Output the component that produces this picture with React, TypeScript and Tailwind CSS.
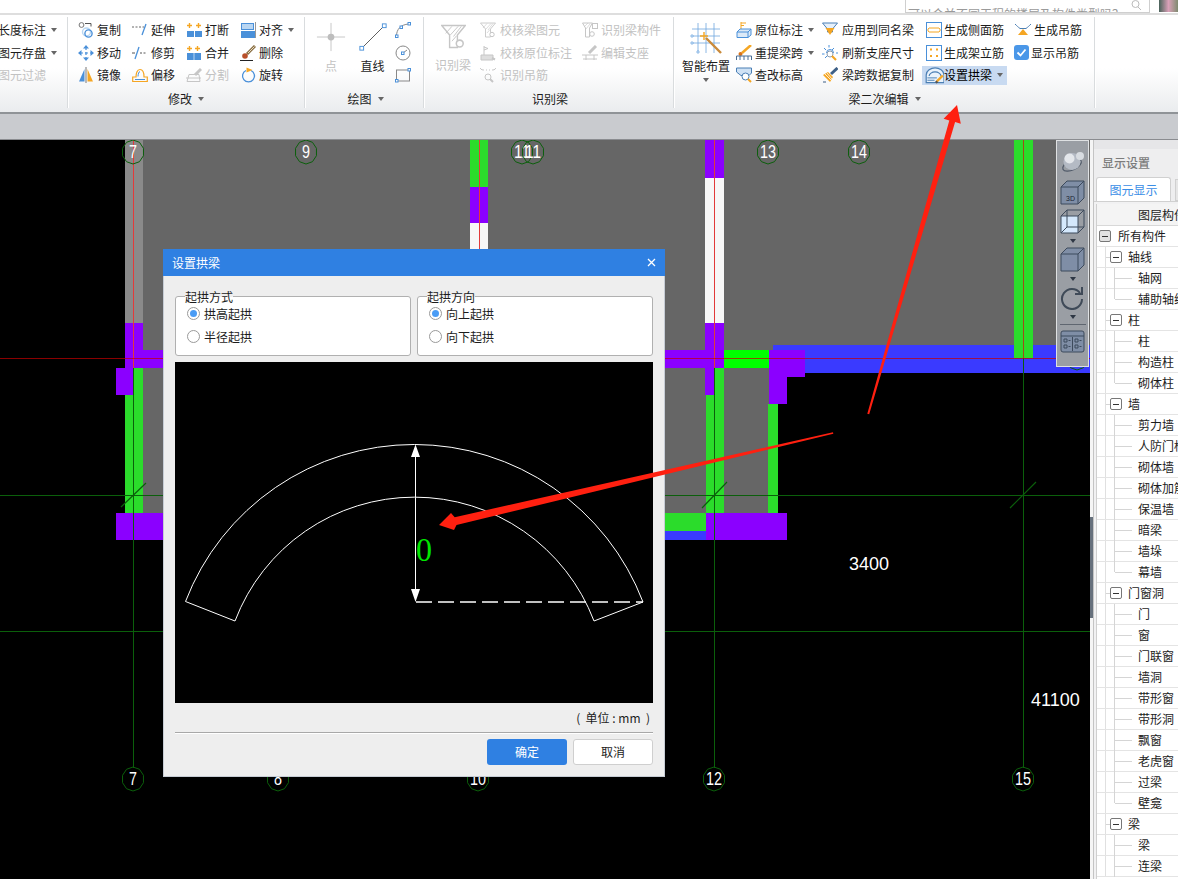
import type { ReactNode } from "react";

const BLUE = "#4a90d9";
const LIGHT = "#b9d6f2";
const ORANGE = "#f5a623";
const OFF = "#c6c6c6";
const DARKGREEN = "#0b5f0b";

function Ic({ children, size = 16 }: { children: ReactNode; size?: number }) {
  return (
    <svg width={size} height={size} viewBox="0 0 16 16" fill="none" className="shrink-0">
      {children}
    </svg>
  );
}

function Caret({ className = "" }: { className?: string }) {
  return <span className={`inline-block w-0 h-0 border-x-[3.5px] border-t-[4px] border-x-transparent border-t-[#666] ${className}`} />;
}

function Item({ icon, label, w, off, caret }: { icon?: ReactNode; label: string; w: number; off?: boolean; caret?: boolean }) {
  return (
    <div className={`flex items-center h-[22.5px] whitespace-nowrap ${off ? "text-[#c2c2c2]" : "text-[#1c1c1c]"}`}>
      <div style={{ width: w }} className="shrink-0 flex items-center">
        {icon}
      </div>
      <span>{label}</span>
      {caret && <Caret className="ml-[5px]" />}
    </div>
  );
}

function Group({ width, label, children, caret, labelPad = 0 }: { width: number; label?: string; children: ReactNode; caret?: boolean; labelPad?: number }) {
  return (
    <div style={{ width }} className="shrink-0 h-full flex flex-col relative">
      <div className="flex h-[72px] pt-[4px]">{children}</div>
      <div style={{ paddingRight: labelPad }} className="flex-1 flex items-center justify-center gap-[6px] pb-[2px] text-[#1c1c1c]">
        {label && <span>{label}</span>}
        {caret && <Caret />}
      </div>
      <div className="absolute right-0 top-[2px] bottom-[4px] w-[2px] bg-[#d9dcde] border-r border-white" />
    </div>
  );
}

/* ---------- small ribbon icons ---------- */
const CopyIc = (
  <Ic>
    <circle cx="3.5" cy="3" r="2.4" stroke="#777" />
    <path d="M7 1.5h6v3" stroke="#555" />
    <circle cx="8.5" cy="10" r="4" stroke={LIGHT} strokeWidth="1.4" />
    <circle cx="10.5" cy="11.5" r="3.6" stroke={BLUE} strokeWidth="1.4" />
  </Ic>
);
const ExtendIc = (
  <Ic>
    <path d="M0 5h2M3.5 5h2M7 5h2" stroke="#666" />
    <path d="M10 13l4-11" stroke={BLUE} strokeWidth="1.3" />
    <path d="M10.5 5h1.5" stroke="#666" />
  </Ic>
);
const BreakIc = (
  <Ic>
    <path d="M1 3.5h5M3.5 1v5M10 3.5h5M12.5 1v5" stroke={ORANGE} strokeWidth="1.4" />
    <rect x="1" y="9" width="7" height="6" fill={BLUE} />
    <rect x="9" y="9" width="7" height="6" fill={BLUE} />
  </Ic>
);
const AlignIc = (
  <Ic>
    <rect x="1.5" y="1.5" width="12" height="6" fill={LIGHT} stroke={BLUE} />
    <rect x="1" y="9" width="14" height="7" fill={BLUE} />
    <path d="M15.5 0v16" stroke="#999" />
  </Ic>
);
const MoveIc = (
  <Ic>
    <path d="M8 2v12M2 8h12" stroke={BLUE} strokeWidth="1.2" strokeDasharray="3 2" />
    <path d="M8 0l3 3.5H5zM8 16l3-3.5H5zM0 8l3.5-3v6zM16 8l-3.5-3v6z" fill={BLUE} />
  </Ic>
);
const TrimIc = (
  <Ic>
    <path d="M0 8h3M8 8h2M11.5 8h2" stroke="#555" />
    <path d="M3 14l4-12" stroke={BLUE} strokeWidth="1.3" />
  </Ic>
);
const MergeIc = (
  <Ic>
    <path d="M1 3.5h5M3.5 1v5M9 3.5h5M11.5 1v5" stroke={ORANGE} strokeWidth="1.4" />
    <rect x="1" y="8" width="14" height="7" fill={BLUE} />
    <path d="M8 8v7" stroke={LIGHT} />
  </Ic>
);
const DeleteIc = (
  <Ic>
    <path d="M15 1L7 9" stroke="#8a6f45" strokeWidth="3" />
    <path d="M14.5 1.5L8 8" stroke="#e8dcc0" />
    <circle cx="5" cy="11" r="2.8" fill="#b9502a" />
    <path d="M0 15.5h13" stroke="#222" />
  </Ic>
);
const MirrorIc = (
  <Ic>
    <path d="M1 14.5L6.5 2v12.5z" fill={BLUE} />
    <path d="M8 0v16" stroke="#777" />
    <path d="M9.5 2L15 14.5H9.5z" fill={ORANGE} />
  </Ic>
);
const OffsetIc = (
  <Ic>
    <path d="M0.7 14.5V10H4c0-3.5 1-7.5 4-7.5s4 4 4 7.5h3.3v4.5z" stroke={ORANGE} strokeWidth="1.2" />
    <path d="M3 12.5h10M6 9.5c0-2.5 1-5 2-5" stroke={BLUE} />
  </Ic>
);
const SplitIc = (
  <Ic>
    <path d="M1 14.5h13l-1-7H3zM0 11h15" stroke={OFF} />
    <path d="M15 2l-6 6" stroke={OFF} strokeWidth="3" />
  </Ic>
);
const RotateIc = (
  <Ic>
    <path d="M6 3.5A6 6 0 1 0 11 3.5" stroke={BLUE} strokeWidth="1.3" />
    <path d="M6.5 0.5l6 2.5-6 2.5z" fill={ORANGE} />
  </Ic>
);

/* hatched funnel used by the greyed beam tools */
function Funnel({ size = 16 }: { size?: number }) {
  return (
    <Ic size={size}>
      <path d="M0.5 1h15l-5 6v8h-5V7z" stroke={OFF} strokeWidth="0.9" />
      <path d="M3 6l4-4.500M6 7l5-5.500M8 8l5-6.500M7 11l3-3.500" stroke={OFF} strokeWidth="0.6" />
      <circle cx="12" cy="12.5" r="2.2" fill="#fff" stroke={OFF} />
    </Ic>
  );
}
const CheckOriginIc = (
  <Ic>
    <path d="M4 1v9M4 2l4 1.5L4 5" stroke={OFF} />
    <path d="M1 10h12v5H1z" fill="#dedede" stroke={OFF} />
    <path d="M12 13l3 1.5" stroke={OFF} strokeWidth="2" />
  </Ic>
);
const RecogHangIc = (
  <Ic>
    <path d="M0 1c1 2 3 2 4 2M16 1c-1 2-3 2-4 2M6 3h1M9 3h1" stroke={OFF} />
    <circle cx="8" cy="10" r="3" stroke={OFF} />
    <path d="M10 12l3 3" stroke={OFF} strokeWidth="2" />
  </Ic>
);
const RecogPartIc = (
  <Ic>
    <path d="M0.5 1h10l-3 5v9h-4V6z" stroke={OFF} />
    <path d="M2 5l4-4M4 7l4-5" stroke={OFF} strokeWidth="0.6" />
    <rect x="10.5" y="1.5" width="5" height="5" stroke={OFF} />
    <circle cx="10" cy="12" r="2.3" stroke={OFF} />
  </Ic>
);
const EditSeatIc = (
  <Ic>
    <path d="M0 10h16M1 14h14M4 10v5M12 10v5" stroke={OFF} />
    <path d="M14 1L7 8" stroke={OFF} strokeWidth="3" />
  </Ic>
);

const OriginIc = (
  <Ic>
    <path d="M5 0v8M5 1h5M5 3.5h3" stroke={ORANGE} />
    <path d="M1 10l3-3h11v6l-3 2.5H1z" fill="#dbe9f7" stroke={BLUE} />
    <path d="M1 10h11v5.5M12 10l3-3" stroke={BLUE} />
  </Ic>
);
const ReSpanIc = (
  <Ic>
    <path d="M15 0L6 8" stroke={ORANGE} strokeWidth="2.5" />
    <circle cx="4.5" cy="9" r="2" fill="#d9731a" />
    <path d="M0.5 15v-4h15v4M4 11v4M8 11v4M12 11v4" stroke="#4b6f96" />
  </Ic>
);
const ElevIc = (
  <Ic>
    <path d="M0.5 1h15v5l-2.5 2.5H5L0.5 5z" fill="#cfe2f5" stroke="#4b7fb4" />
    <circle cx="9.5" cy="9.5" r="3.5" fill="#fff" stroke="#4b7fb4" />
    <path d="M12 12l3 3" stroke={ORANGE} strokeWidth="2" />
  </Ic>
);
const ApplyIc = (
  <Ic>
    <path d="M0.5 1h15l-5 6v3h-5V7z" fill="#e6f0fa" stroke="#4b7fb4" />
    <path d="M3.5 6h9L8 13z" fill={ORANGE} />
  </Ic>
);
const RefreshIc = (
  <Ic>
    <path d="M7 0v2.5M2 3l2 2M12 3l-2 2M0 9h2.5M14 8h2M3 13l2-2" stroke={BLUE} />
    <path d="M4.5 8a3.5 3.5 0 0 1 7 0" stroke={BLUE} />
    <circle cx="8" cy="9" r="3" stroke="#8a9cb0" />
    <path d="M10 11l4 4" stroke={ORANGE} strokeWidth="2.2" />
  </Ic>
);
const CopyDataIc = (
  <Ic>
    <path d="M15.5 1L9 7" stroke="#3d5f86" strokeWidth="3" />
    <path d="M1 8l5-3 5 5-3 5z" fill={ORANGE} />
    <path d="M3 7l6 6M5 6l5 6" stroke="#fff" strokeWidth="0.8" />
    <path d="M1 15h3" stroke="#3d5f86" />
  </Ic>
);
const SideIc = (
  <Ic>
    <rect x="0.5" y="0.5" width="15" height="15" stroke={BLUE} />
    <path d="M3 6h10M3 10h10M3 6c-1.5 1-1.5 3 0 4M13 6c1.5 1 1.5 3 0 4" stroke={ORANGE} />
  </Ic>
);
const FrameIc = (
  <Ic>
    <rect x="0.5" y="0.5" width="15" height="15" stroke={BLUE} />
    <path d="M4 4.5h2M10 4.5h2M4 11h2M10 11h2" stroke={ORANGE} strokeWidth="2" />
  </Ic>
);
const ArchIc = (
  <Ic size={19}>
    <path d="M1 14V7.5C1 4 5 1.5 8.5 1.5S16 4 16 7.5V14z" fill="#e9f2fb" stroke="#4b7fb4" />
    <path d="M3.5 8.5c0-2 2.5-3.5 5-3.5s5 1.5 5 3.5" stroke="#4b7fb4" />
    <path d="M2 10h8M2 12h6" stroke="#4b7fb4" strokeWidth="0.8" />
    <path d="M15 8l-5 5" stroke={ORANGE} strokeWidth="2" />
    <path d="M9 14l1.5-1" stroke="#555" strokeWidth="2" />
  </Ic>
);
const HangIc = (
  <Ic>
    <path d="M0 2c2 2 3 3 5 4.5h6C13 5 14 4 16 2" stroke="#4b7fb4" />
    <path d="M8 7l5 6H3z" fill={ORANGE} />
  </Ic>
);
const ShowIc = (
  <span className="w-[15px] h-[15px] rounded-[3px] bg-[#4a97e8] flex items-center justify-center">
    <svg width="11" height="11" viewBox="0 0 11 11" fill="none">
      <path d="M1.5 5.5l3 3 5-6" stroke="#fff" strokeWidth="1.8" />
    </svg>
  </span>
);

function Ribbon() {
  return (
    <div className="flex h-[97px] bg-linear-to-b from-white via-white via-55% to-[#eaecee] text-[12px] leading-none">
      <Group width={69}>
        <div className="flex flex-col w-[69px] overflow-hidden">
          <div className="-ml-[2px]">
            <Item w={0} label="长度标注" caret />
            <Item w={0} label="图元存盘" caret />
            <Item w={0} label="图元过滤" off />
          </div>
        </div>
      </Group>

      <Group width={237} label="修改" caret labelPad={3}>
        <div className="flex pl-[9px]">
          <div className="w-[54px]">
            <Item w={19} icon={CopyIc} label="复制" />
            <Item w={19} icon={MoveIc} label="移动" />
            <Item w={19} icon={MirrorIc} label="镜像" />
          </div>
          <div className="w-[54px]">
            <Item w={19} icon={ExtendIc} label="延伸" />
            <Item w={19} icon={TrimIc} label="修剪" />
            <Item w={19} icon={OffsetIc} label="偏移" />
          </div>
          <div className="w-[54px]">
            <Item w={19} icon={BreakIc} label="打断" />
            <Item w={19} icon={MergeIc} label="合并" />
            <Item w={19} icon={SplitIc} label="分割" off />
          </div>
          <div>
            <Item w={19} icon={AlignIc} label="对齐" caret />
            <Item w={19} icon={DeleteIc} label="删除" />
            <Item w={19} icon={RotateIc} label="旋转" />
          </div>
        </div>
      </Group>

      <Group width={119} label="绘图" caret>
        <div className="flex pl-[5px]">
          <div className="w-[40px] flex flex-col items-center pt-[3px] gap-[8px] text-[#c2c2c2]">
            <Ic size={30}>
              <path d="M8 0.5v15M0.5 8h15" stroke="#c4c4c4" strokeWidth="0.5" />
              <circle cx="8" cy="8" r="1.8" fill="#bdbdbd" />
            </Ic>
            <span>点</span>
          </div>
          <div className="w-[43px] flex flex-col items-center pt-[3px] gap-[8px] text-[#1c1c1c]">
            <Ic size={30}>
              <path d="M2 14L14 2" stroke="#555" strokeWidth="0.5" />
              <rect x="1" y="13" width="2" height="2" fill="#fff" stroke={BLUE} strokeWidth="0.5" />
              <rect x="13" y="1" width="2" height="2" fill="#fff" stroke={BLUE} strokeWidth="0.5" />
            </Ic>
            <span>直线</span>
          </div>
          <div className="flex flex-col ml-[1px]">
            <div className="h-[22.5px] flex items-center">
              <Ic>
                <path d="M1.5 14C1.5 8 5 2.5 14 2" stroke="#888" />
                <rect x="0.5" y="13" width="2.5" height="2.5" fill="#fff" stroke={BLUE} />
                <rect x="13" y="0.5" width="2.5" height="2.5" fill="#fff" stroke={BLUE} />
                <rect x="5" y="4" width="2.5" height="2.5" fill="#fff" stroke={BLUE} />
              </Ic>
            </div>
            <div className="h-[22.5px] flex items-center">
              <Ic>
                <circle cx="8" cy="8" r="7" stroke="#888" />
                <path d="M8 8l4-3" stroke="#888" />
                <rect x="6.5" y="7" width="2.5" height="2.5" fill="#fff" stroke={BLUE} />
              </Ic>
            </div>
            <div className="h-[22.5px] flex items-center">
              <Ic>
                <rect x="1.5" y="3" width="13" height="11" stroke="#888" />
                <rect x="0.5" y="12.5" width="2.5" height="2.5" fill="#fff" stroke={BLUE} />
                <rect x="13" y="1.5" width="2.5" height="2.5" fill="#fff" stroke={BLUE} />
              </Ic>
            </div>
          </div>
        </div>
      </Group>

      <Group width={250} label="识别梁">
        <div className="flex pl-[10px]">
          <div className="w-[45px] flex flex-col items-start pt-[5px] gap-[10px] text-[#c2c2c2]">
            <span className="pl-[6px]">
              <Funnel size={25} />
            </span>
            <span>识别梁</span>
          </div>
          <div className="w-[102px]">
            <Item w={20} icon={<Funnel />} label="校核梁图元" off />
            <Item w={20} icon={CheckOriginIc} label="校核原位标注" off />
            <Item w={20} icon={RecogHangIc} label="识别吊筋" off />
          </div>
          <div>
            <Item w={19} icon={RecogPartIc} label="识别梁构件" off />
            <Item w={19} icon={EditSeatIc} label="编辑支座" off />
          </div>
        </div>
      </Group>

      <Group width={421} label="梁二次编辑" caret labelPad={2}>
        <div className="flex pl-[4px]">
          <div className="w-[54px] mr-[3px] flex flex-col items-center pt-[3px] text-[#1c1c1c]">
            <Ic size={32}>
              <path d="M1 3.5h14M1 7h14M1 10.5h14M4 0.5v15M8 0.5v15M12 0.5v15" stroke="#6ea6de" strokeWidth="0.4" />
              <path d="M0.5 6.5h1v1h-1zM0.5 10h1v1h-1zM3.5 14.5h1v1h-1z" fill="#fff" stroke="#4a90d9" strokeWidth="0.3" />
              <path d="M15.5 15.5L8 8" stroke="#c98a3a" strokeWidth="1.2" />
              <path d="M7 5v4M5 7h4" stroke={ORANGE} strokeWidth="0.7" />
            </Ic>
            <span className="mt-[6px]">智能布置</span>
            <Caret className="mt-[6px]" />
          </div>
          <div className="w-[86px]">
            <Item w={19} icon={OriginIc} label="原位标注" caret />
            <Item w={19} icon={ReSpanIc} label="重提梁跨" caret />
            <Item w={19} icon={ElevIc} label="查改标高" />
          </div>
          <div className="w-[104px]">
            <Item w={20} icon={ApplyIc} label="应用到同名梁" />
            <Item w={20} icon={RefreshIc} label="刷新支座尺寸" />
            <Item w={20} icon={CopyDataIc} label="梁跨数据复制" />
          </div>
          <div className="w-[89px]">
            <Item w={18} icon={SideIc} label="生成侧面筋" />
            <Item w={18} icon={FrameIc} label="生成架立筋" />
            <div className="h-[22.5px] flex items-center -ml-[4px]">
              <div className="w-[85px] h-[19px] bg-[#c8daf1] flex items-center pl-[3px] whitespace-nowrap">
                <span className="w-[19px] shrink-0">{ArchIc}</span>
                <span>设置拱梁</span>
                <Caret className="ml-[5px]" />
              </div>
            </div>
          </div>
          <div>
            <Item w={19} icon={HangIc} label="生成吊筋" />
            <Item w={16} icon={<span className="-ml-[1px]">{ShowIc}</span>} label="显示吊筋" />
          </div>
        </div>
      </Group>
    </div>
  );
}

/* ---------- CAD drawing ---------- */
function Axis({ x, y, t }: { x: number; y: number; t: string }) {
  const pts = Array.from({ length: 10 }, (_, i) => {
    const a = (i * Math.PI) / 5 + Math.PI / 10;
    return `${x + 11 * Math.cos(a)},${y + 12 * Math.sin(a)}`;
  }).join(" ");
  return (
    <g>
      <polygon points={pts} fill="none" stroke={DARKGREEN} />
      {t && (
        <text x={x} y={y + 6} textAnchor="middle" fontSize="19" fill="#fff" fontFamily="Liberation Sans" textLength={t.length * 8} lengthAdjust="spacingAndGlyphs">
          {t}
        </text>
      )}
    </g>
  );
}

const rects: [number, number, number, number, string][] = [
  // concrete slab
  [125, 140, 965, 205, "#666666"],
  [143, 345, 630, 5, "#666666"],
  [143, 350, 563, 163, "#666666"],
  // left wall
  [125, 140, 18, 183, "#8a8a8a"],
  [125, 323, 18, 45, "#8b00ff"],
  [143, 350, 20, 18, "#8b00ff"],
  [116, 368, 18, 27, "#8b00ff"],
  [134, 368, 9, 27, "#2bdc2b"],
  [125, 395, 18, 118, "#2bdc2b"],
  [116, 513, 60, 27, "#8b00ff"],
  // middle columns
  [470, 140, 18, 47, "#2bdc2b"],
  [470, 187, 18, 36, "#8b00ff"],
  [470, 223, 18, 40, "#f7f7f7"],
  [705, 140, 19, 38, "#8b00ff"],
  [705, 178, 19, 145, "#f7f7f7"],
  [705, 323, 19, 72, "#8b00ff"],
  [650, 350, 74, 18, "#8b00ff"],
  [715, 368, 9, 27, "#2bdc2b"],
  [706, 395, 18, 118, "#2bdc2b"],
  [650, 513, 56, 18, "#2bdc2b"],
  [650, 531, 56, 9, "#3a3aff"],
  [706, 513, 81, 27, "#8b00ff"],
  [724, 350, 45, 18, "#00ff00"],
  [724, 368, 45, 145, "#666666"],
  [768, 404, 10, 109, "#2bdc2b"],
  // right blue beam
  [773, 345, 317, 28, "#3a3aff"],
  [769, 350, 36, 27, "#8b00ff"],
  [769, 377, 18, 27, "#8b00ff"],
  [1014, 140, 19, 218, "#2bdc2b"],
];

function Drawing() {
  return (
    <svg viewBox="0 140 1090 739" width="1090" height="739" className="block" shapeRendering="crispEdges">
      {rects.map(([x, y, w, h, c], i) => (
        <rect key={i} x={x} y={y} width={w} height={h} fill={c} />
      ))}
      <g shapeRendering="auto">
        {/* axis lines */}
        <g stroke={DARKGREEN} strokeWidth="1" shapeRendering="crispEdges">
          <path d="M0 495.5H1090M0 631.5H1090" />
          <path d="M133.5 368V768M278.5 700V768M478.5 700V768M714.5 368V768M1023.5 358V768" />
        </g>
        <path d="M121 507L146 483M702 508L727 482M1010 508L1036 482" stroke={DARKGREEN} strokeWidth="1.2" />
        <g stroke="#e23a3a" strokeWidth="1" shapeRendering="crispEdges">
          <path d="M133.5 140V368M479.5 140V260M714.5 140V368" />
        </g>
        <path d="M1023.5 140V358" stroke="#a34a1a" shapeRendering="crispEdges" />
        <path d="M0 358.5H1090" stroke="#c40000" strokeOpacity="0.7" shapeRendering="crispEdges" />

        <Axis x={133} y={152} t="7" />
        <Axis x={306} y={152} t="9" />
        <Axis x={522} y={152} t="11" />
        <Axis x={533} y={152} t="11" />
        <Axis x={768} y={152} t="13" />
        <Axis x={859} y={152} t="14" />
        <Axis x={1077} y={358} t="" />
        <Axis x={133} y={779} t="7" />
        <Axis x={278} y={779} t="8" />
        <Axis x={478} y={779} t="10" />
        <Axis x={714} y={779} t="12" />
        <Axis x={1023} y={779} t="15" />

        <text x="849" y="570" fontSize="18" fill="#fff" fontFamily="Liberation Sans">3400</text>
        <text x="1031" y="706" fontSize="18" fill="#fff" fontFamily="Liberation Sans">41100</text>
      </g>
    </svg>
  );
}

/* ---------- dialog ---------- */
function Radio({ label, on }: { label: string; on?: boolean }) {
  return (
    <div className="flex items-center gap-[4px] h-[23px]">
      <span className="w-[13px] h-[13px] rounded-full border border-[#9a9a9a] bg-white flex items-center justify-center">
        {on && <span className="w-[7px] h-[7px] rounded-full bg-[#4a9cf5]" />}
      </span>
      <span>{label}</span>
    </div>
  );
}

function Box({ title, a, b }: { title: string; a: string; b: string }) {
  return (
    <div className="relative h-[60px] bg-white border border-[#b0b0b0] rounded-[3px] pl-[11px] pt-[5px]">
      <span className="absolute left-[9px] -top-[7px] leading-[14px] bg-linear-to-b from-[#eeeeee] from-50% to-white to-50%">{title}</span>
      <Radio label={a} on />
      <Radio label={b} />
    </div>
  );
}

function ArchPreview() {
  return (
    <svg viewBox="175 362 478 341" width="478" height="341" className="block bg-black">
      <g stroke="#fff" fill="none" strokeWidth="1">
        <path d="M185.5 601.5A245 245 0 0 1 643 602" />
        <path d="M235 621A192 192 0 0 1 594 621" />
        <path d="M185.5 601.5L235 621M643 602L594 621" />
        <path d="M415.5 446V600" />
        <path d="M416 602H643" strokeDasharray="16 6" strokeWidth="1.3" />
      </g>
      <path d="M415.5 444.5L411 457H420zM415.5 602L411 589H420z" fill="#fff" />
      <text x="416" y="561" fontSize="34" fill="#00e600" fontFamily="Liberation Serif" textLength="16" lengthAdjust="spacingAndGlyphs">0</text>
    </svg>
  );
}

function Dialog() {
  return (
    <div className="absolute left-[163px] top-[249px] w-[502px] h-[528px] flex flex-col bg-[#eeeeee] border-x border-b border-[#c6ccd4] text-[12px] leading-none text-[#1c1c1c]">
      <div className="h-[27px] shrink-0 -mx-px bg-[#2f80e2] text-white flex items-center justify-between pl-[9px] pr-[9px]">
        <span>设置拱梁</span>
        <svg width="9" height="9" viewBox="0 0 9 9" fill="none">
          <path d="M1 1l7 7M8 1L1 8" stroke="#fff" strokeWidth="1.3" />
        </svg>
      </div>
      <div className="flex-1 px-[11px]">
        <div className="grid grid-cols-2 gap-[6px] mt-[20px]">
          <Box title="起拱方式" a="拱高起拱" b="半径起拱" />
          <Box title="起拱方向" a="向上起拱" b="向下起拱" />
        </div>
        <div className="mt-[6px]">
          <ArchPreview />
        </div>
        <div className="h-[29px] flex items-center justify-end pr-[3px] whitespace-pre">{"(  单位 : mm  )"}</div>
        <div className="border-t border-[#a8a8a8] border-b-white border-b h-[2px]" />
        <div className="flex justify-end gap-[6px] mt-[5px]">
          <button className="w-[80px] h-[26px] rounded-[3px] bg-[#2f80e2] text-white">确定</button>
          <button className="w-[80px] h-[26px] rounded-[3px] bg-white border border-[#cfcfcf]">取消</button>
        </div>
      </div>
    </div>
  );
}

/* ---------- floating view toolbar ---------- */
function ViewBar() {
  const line = "#3d4a5c";
  return (
    <div className="absolute left-[1056px] top-0 w-[33px] h-[227px] bg-[#9a9ea4] border border-[#dfe1e3] flex flex-col items-center pt-[9px]">
      <svg width="24" height="23" viewBox="0 0 24 23">
        <ellipse cx="11" cy="15" rx="10" ry="5" fill="none" stroke="#4f5968" strokeWidth="1.2" transform="rotate(-25 11 15)" />
        <circle cx="11" cy="11.500" r="8.5" fill="#b4bac4" />
        <circle cx="8.5" cy="8.500" r="5" fill="#e4e7eb" />
        <circle cx="19" cy="6" r="4" fill="#d8dce1" />
      </svg>
      <svg width="25" height="25" viewBox="0 0 25 25" className="mt-[7px]" fill="none" stroke={line}>
        <path d="M1 7h17v17H1zM1 7l6-6h17v17l-6 6M18 7l6-6" fill="#7f8ea6" />
        <text x="6" y="21" fontSize="7" fill="#1d2633" stroke="none" fontFamily="Liberation Sans">3D</text>
      </svg>
      <svg width="25" height="25" viewBox="0 0 25 25" className="mt-[4px]" fill="none" stroke={line}>
        <path d="M1 7h17v17H1z" fill="#d4e8fc" />
        <path d="M1 7l6-6h17v17l-6 6M18 7l6-6M7 1v17h17M1 24l6-6" />
      </svg>
      <Caret className="mt-[5px] !border-t-[#2e3744]" />
      <svg width="25" height="25" viewBox="0 0 25 25" className="mt-[4px]" fill="none" stroke={line}>
        <path d="M1 7h17v17H1zM1 7l6-6h17v17l-6 6M18 7l6-6" fill="#7f8ea6" />
      </svg>
      <Caret className="mt-[5px] !border-t-[#2e3744]" />
      <svg width="25" height="25" viewBox="0 0 25 25" className="mt-[4px]" fill="none">
        <path d="M20 8A10 10 0 1 0 22 14" stroke="#3f4a58" strokeWidth="2" />
        <path d="M22 2v7h-7" stroke="#3f4a58" strokeWidth="2" />
      </svg>
      <Caret className="mt-[5px] !border-t-[#2e3744]" />
      <div className="w-[26px] h-px bg-[#5f6670] mt-[5px]" />
      <svg width="25" height="23" viewBox="0 0 25 23" className="mt-[5px]" fill="#7f8ea6" stroke={line}>
        <rect x="1" y="1" width="23" height="21" rx="2" />
        <path d="M1 6h23M12.5 7v14" fill="none" />
        <path d="M4 9h3v3H4zM4 15h3v3H4zM15 9h3v3h-3zM15 15h3v3h-3z" fill="none" />
        <path d="M8.5 10.5h2M8.5 16.5h2M19.5 10.5h2M19.5 16.5h2" fill="none" />
      </svg>
    </div>
  );
}

/* ---------- right panel tree ---------- */
type Node = { t: string; l: 0 | 1 | 2; last?: boolean };
const tree: Node[] = [
  { t: "所有构件", l: 0 },
  { t: "轴线", l: 1 },
  { t: "轴网", l: 2 },
  { t: "辅助轴线", l: 2, last: true },
  { t: "柱", l: 1 },
  { t: "柱", l: 2 },
  { t: "构造柱", l: 2 },
  { t: "砌体柱", l: 2, last: true },
  { t: "墙", l: 1 },
  { t: "剪力墙", l: 2 },
  { t: "人防门框墙", l: 2 },
  { t: "砌体墙", l: 2 },
  { t: "砌体加筋墙", l: 2 },
  { t: "保温墙", l: 2 },
  { t: "暗梁", l: 2 },
  { t: "墙垛", l: 2 },
  { t: "幕墙", l: 2, last: true },
  { t: "门窗洞", l: 1 },
  { t: "门", l: 2 },
  { t: "窗", l: 2 },
  { t: "门联窗", l: 2 },
  { t: "墙洞", l: 2 },
  { t: "带形窗", l: 2 },
  { t: "带形洞", l: 2 },
  { t: "飘窗", l: 2 },
  { t: "老虎窗", l: 2 },
  { t: "过梁", l: 2 },
  { t: "壁龛", l: 2, last: true },
  { t: "梁", l: 1 },
  { t: "梁", l: 2 },
  { t: "连梁", l: 2 },
];

function Minus({ dark }: { dark?: boolean }) {
  return (
    <span className={`w-[12px] h-[12px] shrink-0 rounded-[2px] border border-[#777] flex items-center justify-center ${dark ? "bg-[#e2e2e2]" : "bg-white"}`}>
      <span className="w-[6px] h-px bg-[#333]" />
    </span>
  );
}

function Row({ n }: { n: Node }) {
  return (
    <div className="flex items-center h-[21px] shrink-0 border-b border-[#e4e4e4] whitespace-nowrap">
      {n.l === 0 && (
        <>
          <span className="shrink-0 ml-[2px] mr-[7px]">
            <Minus dark />
          </span>
          <span className="shrink-0">{n.t}</span>
        </>
      )}
      {n.l === 1 && (
        <>
          <span className="w-[9px] shrink-0 h-full border-r border-[#e0e0e0]" />
          <span className="w-[4px] shrink-0 h-px bg-[#d5d5d5]" />
          <Minus />
          <span className="shrink-0 ml-[6px]">{n.t}</span>
        </>
      )}
      {n.l === 2 && (
        <>
          <span className="w-[9px] shrink-0 h-full border-r border-[#e0e0e0]" />
          <span className={`w-[9px] shrink-0 border-r border-[#d5d5d5] self-start ${n.last ? "h-[10px]" : "h-[21px]"}`} />
          <span className="w-[17px] shrink-0 h-px bg-[#d5d5d5]" />
          <span className="shrink-0 ml-[6px]">{n.t}</span>
        </>
      )}
    </div>
  );
}

function SidePanel() {
  return (
    <div className="w-[88px] h-[739px] shrink-0 relative flex bg-[#f1f1f2] text-[12px] leading-none text-[#1c1c1c] overflow-hidden">
      <div className="absolute left-0 top-[377px] w-[3px] h-[101px] bg-[#67717d]" />
      <div className="w-[4px] shrink-0 bg-[#f5f5f5] border-r border-[#c4c4c4]" />
      <div className="w-[84px] shrink-0 flex flex-col overflow-hidden">
        <div className="h-[9px] shrink-0 bg-[#e6e6e8]" />
        <div className="h-[27px] shrink-0 flex items-center pl-[8px] text-[#7c7c7c] bg-[#eeeeef] font-medium">显示设置</div>
        <div className="h-[26px] shrink-0 flex items-end pl-[2px] gap-[4px] bg-[#eeeeef] border-b border-[#d0d0d0]">
          <div className="w-[75px] shrink-0 h-[24px] bg-white border border-b-0 border-[#d0d0d0] rounded-t-[3px] flex items-center justify-center text-[#3a8ee6]">图元显示</div>
          <div className="w-[10px] shrink-0 h-[22px] bg-[#e6e6e6] border border-[#d0d0d0]" />
        </div>
        <div className="flex-1 min-h-0 bg-white ml-[2px] mt-[2px] border-l border-[#cfcfcf] flex flex-col">
          <div className="h-[22px] shrink-0 bg-[#f4f4f4] border-b border-[#d8d8d8] pl-[41px] flex items-center whitespace-nowrap">图层构件</div>
          {tree.map((n, i) => (
            <Row key={i} n={n} />
          ))}
        </div>
      </div>
    </div>
  );
}

export default function App() {
  return (
    <div className="relative w-[1178px] h-[879px] overflow-hidden bg-white flex flex-col" style={{ fontFamily: '"Noto Sans CJK SC", "Liberation Sans", sans-serif' }}>
      {/* top strip */}
      <div className="h-[15px] shrink-0 border-b-2 border-[#dedede] flex justify-end items-start bg-white">
        <div className="w-[245px] h-[13px] border-x border-b border-[#cfcfcf] overflow-hidden relative text-[12px] leading-none text-[#9a9a9a] pl-[2px] pt-[8px] whitespace-nowrap">
          可以合并不同工程的楼层及构件类型吗？
          <svg width="11" height="11" viewBox="0 0 11 11" fill="none" className="absolute right-[7px] top-0">
            <circle cx="4.5" cy="4" r="3.5" stroke="#bbb" />
            <path d="M7 7l3 3" stroke="#bbb" />
          </svg>
        </div>
        <div className="w-[19px] h-[12px] ml-[9px] bg-linear-to-r from-[#48625a] via-[#d9a0b8] to-[#7f8a70]" />
      </div>

      <Ribbon />

      <div className="h-[28px] shrink-0 bg-[#c9cbcf] border-t-2 border-[#8f9397] border-b border-b-[#8a8c90]" />

      <div className="flex-1 flex">
        <div className="relative w-[1090px] h-[739px] bg-black shrink-0">
          <Drawing />
          <ViewBar />
        </div>
        <SidePanel />
      </div>

      <Dialog />

      {/* annotation arrows drawn over the whole shot */}
      <svg className="absolute inset-0 pointer-events-none" width="1178" height="879" viewBox="0 0 1178 879">
        <polygon points="867.3,413.8 949.3,120.5 943.6,118.8 957,105 960.8,123.8 955.1,122.1 869.2,414.3" fill="#ff2010" />
        <polygon points="833,432.2 454.7,517.2 451,513 439,525 454,530 456.5,525 833.3,433.8" fill="#ff2010" />
      </svg>
    </div>
  );
}
